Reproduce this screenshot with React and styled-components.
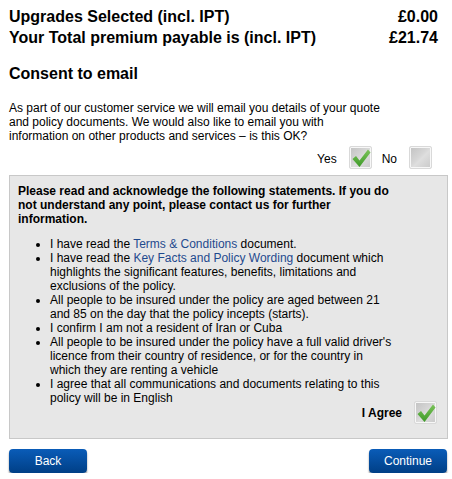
import React from "react";
import styled, { createGlobalStyle } from "styled-components";

const GlobalStyle = createGlobalStyle`
  html, body { margin: 0; padding: 0; background: #fff; }
  body { font-family: "Liberation Sans", Arial, sans-serif; color: #000; }
`;

const Page = styled.div`
  padding: 6px 4px 0 9px;
  width: 452px;
  box-sizing: border-box;
`;

const SummaryRow = styled.div`
  display: flex;
  justify-content: space-between;
  padding-right: 10px;
  font-size: 16px;
  font-weight: bold;
  line-height: 21px;
`;

const SectionTitle = styled.h2`
  margin: 17px 0 0;
  font-size: 16px;
  font-weight: bold;
  line-height: normal;
`;

const Intro = styled.p`
  margin: 18px 0 0;
  max-width: 374px;
  font-size: 12px;
  line-height: normal;
`;

const ChoiceRow = styled.div`
  display: flex;
  justify-content: flex-end;
  gap: 10px;
  margin-top: 3px;
  padding-right: 16px;
`;

const Choice = styled.label`
  display: flex;
  align-items: center;
  gap: 12px;
  font-size: 12px;
  font-weight: ${(p) => (p.$bold ? "bold" : "normal")};
`;

const ChoiceText = styled.span`
  padding-top: ${(p) => p.$drop || 0}px;
`;

const Box = styled.span`
  position: relative;
  display: block;
  width: 23px;
  height: 23px;
  box-sizing: border-box;
  border: 1px solid #d9d9d9;
  border-radius: 2px;
  box-shadow: inset 0 0 0 1px #f7f7f7;
  background: linear-gradient(135deg, #c2c2c2 0%, #d6d6d6 45%, #dedede 55%, #c9c9c9 100%);
`;

const CheckSvg = styled.svg`
  position: absolute;
  left: 1px;
  top: 1px;
`;

const Checkbox = ({ checked }) => (
  <Box>
    {checked && (
      <CheckSvg width="20" height="20" viewBox="0 0 20 20">
        <defs>
          <linearGradient id="cg" x1="0" y1="0" x2="0" y2="1">
            <stop offset="0" stopColor="#7cc35a" />
            <stop offset="1" stopColor="#3d9a28" />
          </linearGradient>
        </defs>
        <polygon points="1.5,11 5,8 8.5,12.5 17,1.5 19.5,4.5 8.5,19" fill="url(#cg)" />
      </CheckSvg>
    )}
  </Box>
);

const Panel = styled.div`
  margin-top: 6px;
  border: 1px solid #c8c8c8;
  background: #e7e7e7;
  padding: 8px 10px 14px 8px;
`;

const PanelBody = styled.div`
  width: 374px;
  font-size: 12px;
  line-height: normal;
`;

const PanelTitle = styled.p`
  margin: 0;
  font-weight: bold;
`;

const List = styled.ul`
  margin: 11px 0 0;
  padding-left: 32px;
  list-style: disc;
`;

const Link = styled.a`
  color: #1f4a8e;
  text-decoration: none;
`;

const AgreeRow = styled.div`
  display: flex;
  justify-content: flex-end;
  margin-top: -4px;
`;

const Actions = styled.div`
  display: flex;
  justify-content: space-between;
  margin-top: 10px;
  padding-right: 1px;
`;

const Button = styled.button`
  width: 78px;
  height: 24px;
  border: none;
  border-radius: 4px;
  background: linear-gradient(#0a5cb8, #003f86);
  box-shadow: 0 2px 2px rgba(0, 0, 0, 0.45);
  color: #fff;
  font-family: "Liberation Sans", Arial, sans-serif;
  font-size: 12px;
  padding: 0 0 1px;
  cursor: pointer;
`;

export default function App() {
  return (
    <Page>
      <GlobalStyle />
      <SummaryRow>
        <span>Upgrades Selected (incl. IPT)</span>
        <span>£0.00</span>
      </SummaryRow>
      <SummaryRow>
        <span>Your Total premium payable is (incl. IPT)</span>
        <span>£21.74</span>
      </SummaryRow>

      <SectionTitle>Consent to email</SectionTitle>
      <Intro>
        As part of our customer service we will email you details of your quote
        and policy documents. We would also like to email you with information
        on other products and services – is this OK?
      </Intro>
      <ChoiceRow>
        <Choice>
          <ChoiceText $drop={3}>Yes</ChoiceText>
          <Checkbox checked />
        </Choice>
        <Choice>
          <ChoiceText $drop={3}>No</ChoiceText>
          <Checkbox />
        </Choice>
      </ChoiceRow>

      <Panel>
        <PanelBody>
          <PanelTitle>
            Please read and acknowledge the following statements. If you do not
            understand any point, please contact us for further information.
          </PanelTitle>
          <List>
            <li>
              I have read the <Link href="#">Terms &amp; Conditions</Link> document.
            </li>
            <li>
              I have read the <Link href="#">Key Facts and Policy Wording</Link>{" "}
              document which highlights the significant features, benefits,
              limitations and exclusions of the policy.
            </li>
            <li>
              All people to be insured under the policy are aged between 21 and 85
              on the day that the policy incepts (starts).
            </li>
            <li>I confirm I am not a resident of Iran or Cuba</li>
            <li>
              All people to be insured under the policy have a full valid driver's
              licence from their country of residence, or for the country in which
              they are renting a vehicle
            </li>
            <li>
              I agree that all communications and documents relating to this
              policy will be in English
            </li>
          </List>
        </PanelBody>
        <AgreeRow>
          <Choice $bold>
            <ChoiceText>I Agree</ChoiceText>
            <Checkbox checked />
          </Choice>
        </AgreeRow>
      </Panel>

      <Actions>
        <Button>Back</Button>
        <Button>Continue</Button>
      </Actions>
    </Page>
  );
}
